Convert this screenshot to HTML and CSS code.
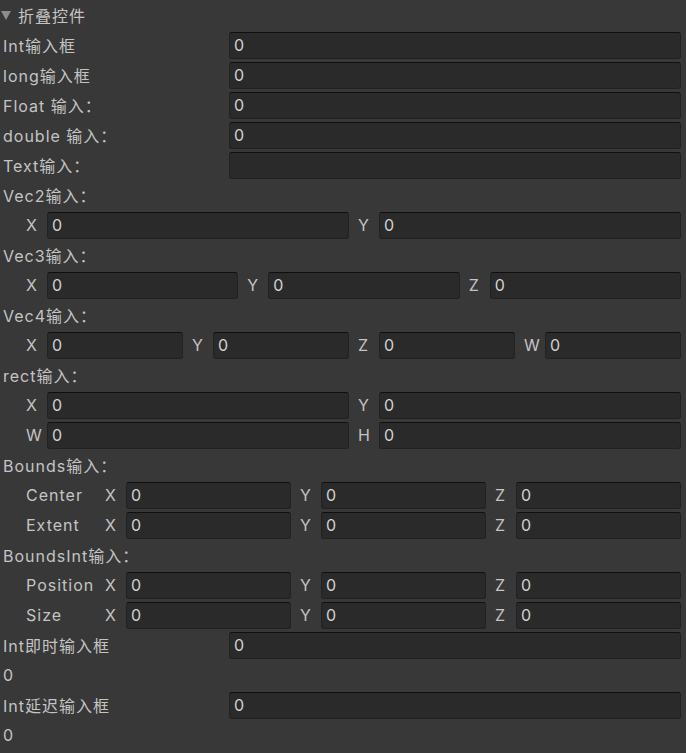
FILE: index.html
```html
<!DOCTYPE html>
<html>
<head>
<meta charset="utf-8">
<link rel="stylesheet" href="styles.css">
</head>
<body>
<div class="inspector">
  <div class="row foldout"><span class="arrow"></span><span class="fold-label">折叠控件</span></div>

  <div class="row"><span class="lbl">Int输入框</span><div class="field">0</div></div>
  <div class="row"><span class="lbl">long输入框</span><div class="field">0</div></div>
  <div class="row"><span class="lbl">Float 输入：</span><div class="field">0</div></div>
  <div class="row"><span class="lbl">double 输入：</span><div class="field">0</div></div>
  <div class="row"><span class="lbl">Text输入：</span><div class="field"></div></div>

  <div class="row"><span class="head">Vec2输入：</span></div>
  <div class="row sub">
    <div class="group"><span class="axis">X</span><div class="field">0</div></div>
    <div class="group"><span class="axis">Y</span><div class="field">0</div></div>
  </div>

  <div class="row"><span class="head">Vec3输入：</span></div>
  <div class="row sub">
    <div class="group"><span class="axis">X</span><div class="field">0</div></div>
    <div class="group"><span class="axis">Y</span><div class="field">0</div></div>
    <div class="group"><span class="axis">Z</span><div class="field">0</div></div>
  </div>

  <div class="row"><span class="head">Vec4输入：</span></div>
  <div class="row sub">
    <div class="group"><span class="axis">X</span><div class="field">0</div></div>
    <div class="group"><span class="axis">Y</span><div class="field">0</div></div>
    <div class="group"><span class="axis">Z</span><div class="field">0</div></div>
    <div class="group"><span class="axis">W</span><div class="field">0</div></div>
  </div>

  <div class="row"><span class="head">rect输入：</span></div>
  <div class="row sub">
    <div class="group"><span class="axis">X</span><div class="field">0</div></div>
    <div class="group"><span class="axis">Y</span><div class="field">0</div></div>
  </div>
  <div class="row sub">
    <div class="group"><span class="axis">W</span><div class="field">0</div></div>
    <div class="group"><span class="axis">H</span><div class="field">0</div></div>
  </div>

  <div class="row"><span class="head">Bounds输入：</span></div>
  <div class="row sub">
    <span class="sublbl">Center</span>
    <div class="groups">
      <div class="group"><span class="axis">X</span><div class="field">0</div></div>
      <div class="group"><span class="axis">Y</span><div class="field">0</div></div>
      <div class="group"><span class="axis">Z</span><div class="field">0</div></div>
    </div>
  </div>
  <div class="row sub">
    <span class="sublbl">Extent</span>
    <div class="groups">
      <div class="group"><span class="axis">X</span><div class="field">0</div></div>
      <div class="group"><span class="axis">Y</span><div class="field">0</div></div>
      <div class="group"><span class="axis">Z</span><div class="field">0</div></div>
    </div>
  </div>

  <div class="row"><span class="head">BoundsInt输入：</span></div>
  <div class="row sub">
    <span class="sublbl">Position</span>
    <div class="groups">
      <div class="group"><span class="axis">X</span><div class="field">0</div></div>
      <div class="group"><span class="axis">Y</span><div class="field">0</div></div>
      <div class="group"><span class="axis">Z</span><div class="field">0</div></div>
    </div>
  </div>
  <div class="row sub">
    <span class="sublbl">Size</span>
    <div class="groups">
      <div class="group"><span class="axis">X</span><div class="field">0</div></div>
      <div class="group"><span class="axis">Y</span><div class="field">0</div></div>
      <div class="group"><span class="axis">Z</span><div class="field">0</div></div>
    </div>
  </div>

  <div class="row"><span class="lbl">Int即时输入框</span><div class="field">0</div></div>
  <div class="row"><span class="head">0</span></div>
  <div class="row"><span class="lbl">Int延迟输入框</span><div class="field">0</div></div>
  <div class="row"><span class="head">0</span></div>
</div>
</body>
</html>
```

FILE: styles.css
```css
html, body {
  margin: 0;
  padding: 0;
  background: #383838;
}

body {
  font-family: Inter, "Noto Sans CJK SC", sans-serif;
  font-size: 16px;
  letter-spacing: 1px;
  color: #c4c4c4;
  height: 753px;
  overflow: hidden;
}

.inspector {
  padding: 0 5px 0 3px;
}

.row {
  height: 30px;
  display: flex;
  align-items: center;
  white-space: nowrap;
}

.foldout {
  margin-left: -3px;
}

.arrow {
  width: 0;
  height: 0;
  margin-left: 1px;
  border-left: 5px solid transparent;
  border-right: 5px solid transparent;
  border-top: 9px solid #8c8c8c;
  margin-top: 1px;
}

.fold-label {
  margin-left: 7px;
}

.lbl {
  width: 226px;
  flex: none;
}

.field {
  flex: 1;
  min-width: 0;
  height: 27px;
  box-sizing: border-box;
  background: #2a2a2a;
  border: 1px solid #212121;
  border-top-color: #0f0f0f;
  border-radius: 3px;
  padding-left: 4px;
  line-height: 25px;
  color: #d2d2d2;
  letter-spacing: 0;
}

.sub {
  padding-left: 23px;
  gap: 9px;
}

.group {
  flex: 1;
  min-width: 0;
  display: flex;
  align-items: center;
}

.axis {
  width: 21px;
  flex: none;
}

.sublbl {
  width: 79px;
  flex: none;
  margin-right: -9px;
}

.groups {
  flex: 1;
  display: flex;
  gap: 9px;
  min-width: 0;
}
```
